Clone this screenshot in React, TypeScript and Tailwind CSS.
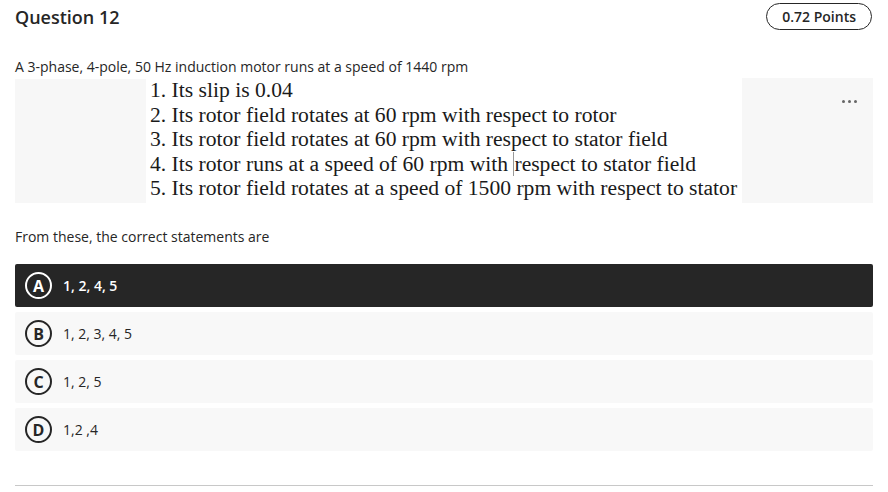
import React from "react";

const opts = [
  { l: "A", t: "1, 2, 4, 5", sel: true },
  { l: "B", t: "1, 2, 3, 4, 5", sel: false },
  { l: "C", t: "1, 2, 5", sel: false },
  { l: "D", t: "1,2 ,4", sel: false },
];

function Option({ l, t, sel }: { l: string; t: string; sel: boolean }) {
  const row = sel
    ? "h-[43px] flex items-center pl-[10px] rounded-[2px] bg-[#262626] text-white"
    : "h-[43px] flex items-center pl-[10px] rounded-[2px] bg-[#f8f8f8] text-[#262626]";
  const circle = sel
    ? "shrink-0 box-border w-[27px] h-[27px] min-w-[27px] rounded-full border-2 border-white flex items-center justify-center text-[16px] font-bold leading-none"
    : "shrink-0 box-border w-[27px] h-[27px] min-w-[27px] rounded-full border-2 border-[#262626] flex items-center justify-center text-[16px] font-bold leading-none";
  const txt = sel ? "ml-[11px] text-[14px] font-semibold" : "ml-[11px] text-[14px] font-medium";
  return (
    <div className={row}>
      <div className={circle}>{l}</div>
      <div className={txt}>{t}</div>
    </div>
  );
}

export default function App() {
  return (
    <div className="w-[888px] h-[492px] bg-white overflow-hidden text-[#262626]" style={{ fontFamily: '"Open Sans", sans-serif' }}>
      <div className="pl-[15px] pr-[15px]">
        <div className="flex items-center justify-between h-[32px] pt-[1px]">
          <div className="text-[18px] font-semibold leading-none">Question 12</div>
          <div className="h-[27px] px-[15px] mr-[1px] flex items-center rounded-full border border-[#262626] text-[14px] font-semibold">0.72 Points</div>
        </div>
        <div className="mt-[26px] text-[14px] leading-[18px] text-[#262626]">A 3-phase, 4-pole, 50 Hz induction motor runs at a speed of 1440 rpm</div>
        <div className="mt-[2px] w-[858px] h-[125px] flex">
          <div className="w-[131px] mt-[1px] bg-[#f7f7f7]"></div>
          <div className="w-[596px] bg-white pl-[4px] pt-[0px] text-[21.6px] leading-[24.6px] text-[#1a1a1a] whitespace-nowrap" style={{ fontFamily: '"Liberation Serif", serif' }}>
            <div>1. Its slip is 0.04</div>
            <div>2. Its rotor field rotates at 60 rpm with respect to rotor</div>
            <div>3. Its rotor field rotates at 60 rpm with respect to stator field</div>
            <div>4. Its rotor runs at a speed of 60 rpm with <span className="border-l border-[#999]">respect to stator field</span></div>
            <div>5. Its rotor field rotates at a speed of 1500 rpm with respect to stator</div>
          </div>
          <div className="flex-1 bg-[#f7f7f7] flex justify-end pr-[16px] pt-[22px]">
            <div className="flex gap-[3px] h-[4px]">
              <span className="w-[3px] h-[3px] rounded-full bg-[#666]"></span>
              <span className="w-[3px] h-[3px] rounded-full bg-[#666]"></span>
              <span className="w-[3px] h-[3px] rounded-full bg-[#666]"></span>
            </div>
          </div>
        </div>
        <div className="mt-[25px] text-[14px] leading-[18px]">From these, the correct statements are</div>
        <div className="mt-[18px] flex flex-col gap-[5px] w-[858px]">
          {opts.map((o) => (
            <Option key={o.l} l={o.l} t={o.t} sel={o.sel} />
          ))}
        </div>
        <div className="mt-[34px] w-[858px] h-[1px] bg-[#c8c8c8]"></div>
      </div>
    </div>
  );
}
